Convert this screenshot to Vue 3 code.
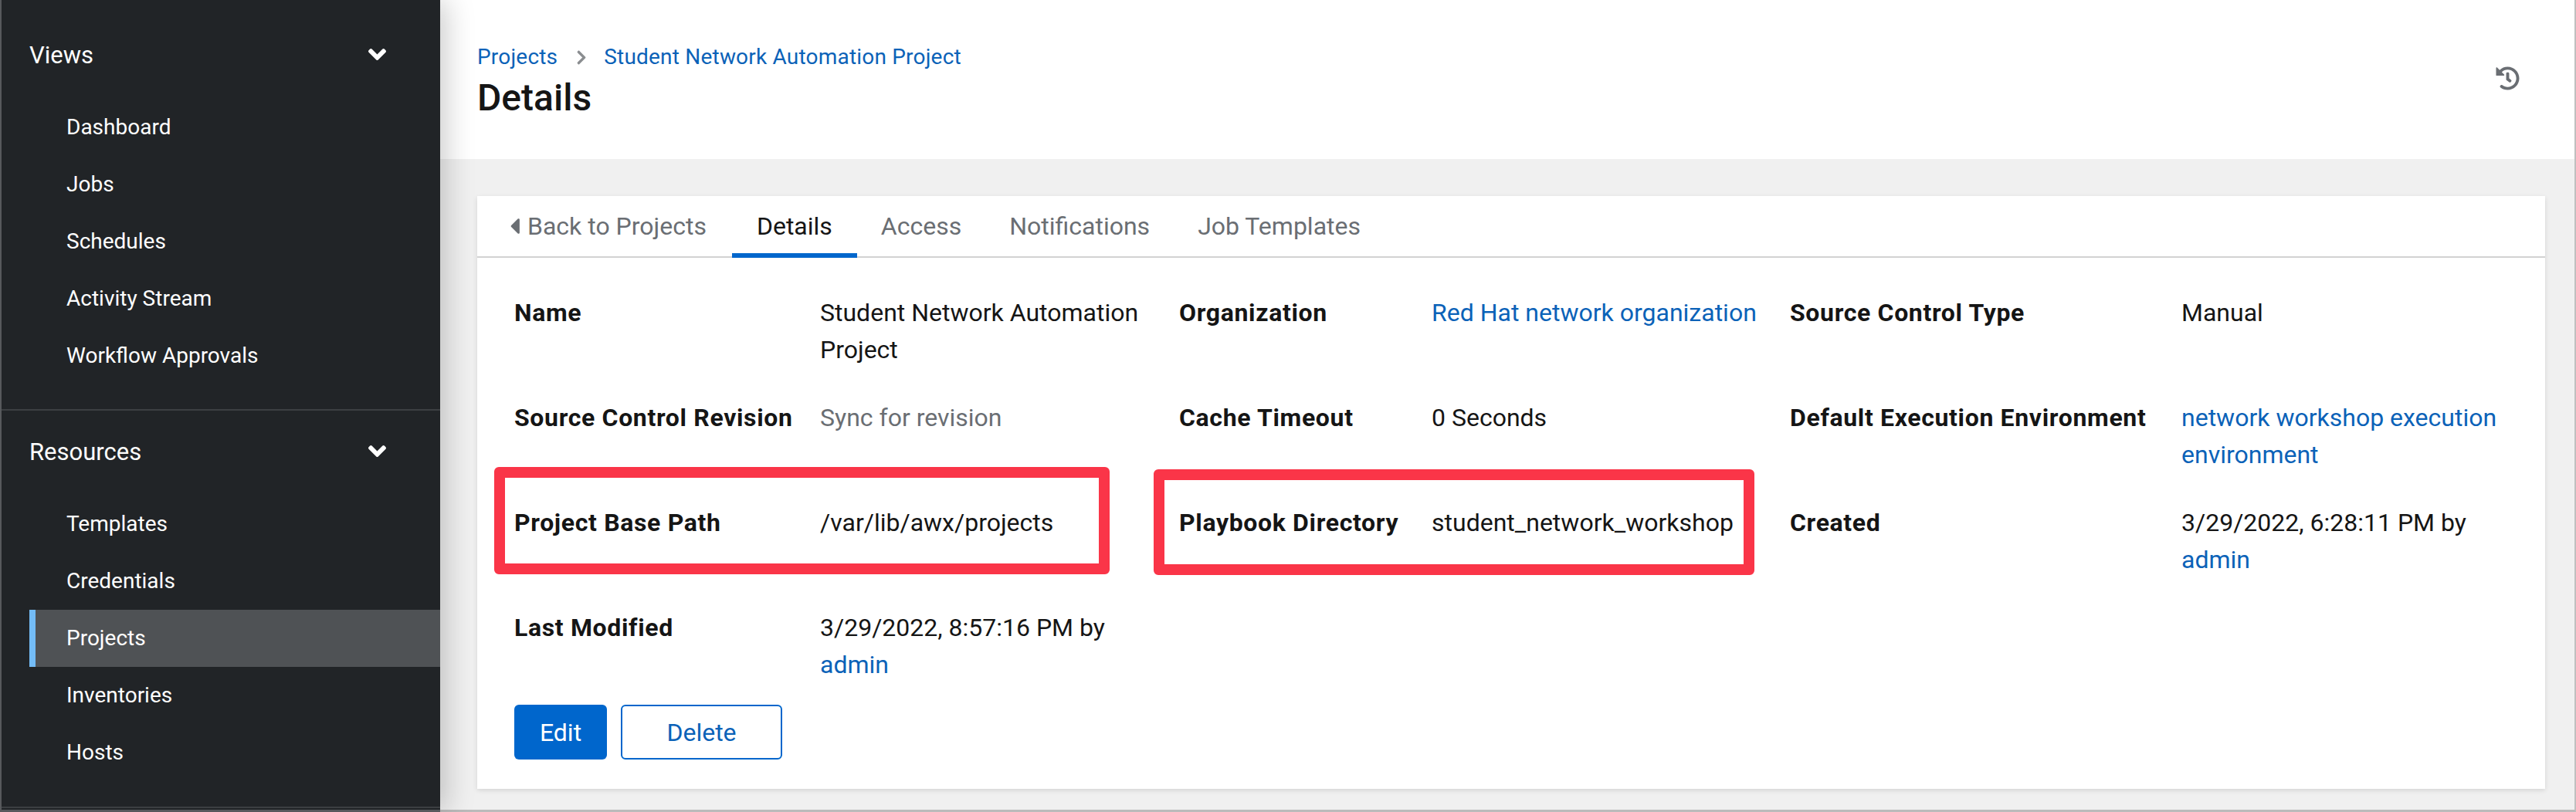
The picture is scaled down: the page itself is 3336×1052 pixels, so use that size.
<script setup>
// sidebar + details data
const navGroups = [
  { title: 'Views', items: ['Dashboard', 'Jobs', 'Schedules', 'Activity Stream', 'Workflow Approvals'] },
  { title: 'Resources', items: ['Templates', 'Credentials', 'Projects', 'Inventories', 'Hosts'] },
]
const tabs = ['Details', 'Access', 'Notifications', 'Job Templates']
const angleDown = 'M143 352.3L7 216.3c-9.4-9.4-9.4-24.6 0-33.9l22.6-22.6c9.4-9.4 24.6-9.4 33.9 0l96.4 96.4 96.4-96.4c9.4-9.4 24.6-9.4 33.9 0l22.6 22.6c9.4 9.4 9.4 24.6 0 33.9l-136 136c-9.2 9.4-24.4 9.4-33.8 0z'
</script>

<template>
  <div class="page">
    <aside class="sidebar">
      <section v-for="group in navGroups" :key="group.title" class="nav-group">
        <div class="nav-title">
          <span>{{ group.title }}</span>
          <svg class="chevron" viewBox="0 0 320 512"><path :d="angleDown" /></svg>
        </div>
        <div
          v-for="item in group.items"
          :key="item"
          class="nav-item"
          :class="{ active: item === 'Projects' }"
        >
          {{ item }}
        </div>
      </section>
    </aside>

    <main class="main">
      <header class="header">
        <div>
          <nav class="crumbs">
            <a>Projects</a>
            <svg class="crumb-sep" viewBox="0 0 320 512">
              <path d="M285.476 272.971L91.132 467.314c-9.373 9.373-24.569 9.373-33.941 0l-22.667-22.667c-9.357-9.357-9.375-24.522-.04-33.901L188.505 256 34.484 101.255c-9.335-9.379-9.317-24.544.04-33.901l22.667-22.667c9.373-9.373 24.569-9.373 33.941 0L285.475 239.03c9.373 9.372 9.373 24.568.001 33.941z" />
            </svg>
            <a>Student Network Automation Project</a>
          </nav>
          <h1>Details</h1>
        </div>
        <svg class="history" viewBox="0 0 512 512">
          <path d="M504 255.531c.253 136.64-111.18 248.372-247.82 248.468-59.015.042-113.223-20.53-155.822-54.911-11.077-8.94-11.905-25.541-1.839-35.607l11.267-11.267c8.609-8.609 22.353-9.551 31.891-1.984C173.062 425.135 212.781 440 256 440c101.705 0 184-82.311 184-184 0-101.705-82.311-184-184-184-48.814 0-93.149 18.969-126.068 49.932l50.754 50.754c10.08 10.08 2.941 27.314-11.313 27.314H24c-8.837 0-16-7.163-16-16V38.627c0-14.254 17.234-21.393 27.314-11.314l49.372 49.372C129.209 34.136 189.552 8 256 8c136.81 0 247.747 110.78 248 247.531zm-180.912 78.784l9.823-12.63c8.138-10.463 6.253-25.542-4.21-33.679L288 256.349V152c0-13.255-10.745-24-24-24h-16c-13.255 0-24 10.745-24 24v135.651l65.409 50.874c10.463 8.137 25.541 6.253 33.679-4.21z" />
        </svg>
      </header>

      <div class="content">
        <div class="card">
          <div class="tabs">
            <div class="tab back">
              <svg class="caret" viewBox="0 0 192 512">
                <path d="M192 127.338v257.324c0 17.818-21.543 26.741-34.142 14.142L29.196 270.142c-7.81-7.81-7.81-20.474 0-28.284l128.662-128.662c12.599-12.6 34.142-3.676 34.142 14.142z" />
              </svg>
              Back to Projects
            </div>
            <div v-for="tab in tabs" :key="tab" class="tab" :class="{ selected: tab === 'Details' }">{{ tab }}</div>
          </div>

          <div class="details">
            <div class="label">Name</div>
            <div class="value">Student Network Automation<br />Project</div>
            <div class="label">Organization</div>
            <div class="value"><a>Red Hat network organization</a></div>
            <div class="label">Source Control Type</div>
            <div class="value">Manual</div>

            <div class="label">Source Control Revision</div>
            <div class="value muted">Sync for revision</div>
            <div class="label">Cache Timeout</div>
            <div class="value">0 Seconds</div>
            <div class="label">Default Execution Environment</div>
            <div class="value"><a>network workshop execution<br />environment</a></div>

            <div class="label">Project Base Path</div>
            <div class="value">/var/lib/awx/projects</div>
            <div class="label">Playbook Directory</div>
            <div class="value">student_network_workshop</div>
            <div class="label">Created</div>
            <div class="value">3/29/2022, 6:28:11 PM by<br /><a>admin</a></div>

            <div class="label">Last Modified</div>
            <div class="value">3/29/2022, 8:57:16 PM by<br /><a>admin</a></div>
          </div>

          <div class="actions">
            <button class="btn primary">Edit</button>
            <button class="btn secondary">Delete</button>
          </div>

          <!-- red annotation boxes drawn over the screenshot -->
          <div class="mark mark-base"></div>
          <div class="mark mark-playbook"></div>
        </div>
      </div>
    </main>
  </div>
</template>

<style>
html,
body {
  margin: 0;
  background: #f0f0f0;
}
</style>

<style scoped>
.page {
  width: 3336px;
  height: 1052px;
  display: flex;
  overflow: hidden;
  box-sizing: border-box;
  font-family: Roboto, 'Liberation Sans', sans-serif;
  font-size: 32px;
  line-height: 48px;
  color: #151515;
}

.sidebar {
  width: 570px;
  flex: none;
  box-sizing: border-box;
  background: #212427;
  color: #fff;
  border-left: 2px solid #57595c;
  border-bottom: 3px solid #57595c;
  box-shadow: 6px 0 36px rgba(0, 0, 0, 0.22);
  position: relative;
  z-index: 1;
  font-size: 28px;
}
.nav-group {
  padding-bottom: 33px;
  border-bottom: 2px solid #3c3f42;
}
.nav-group:first-child {
  padding-top: 18px;
  padding-bottom: 32px;
}
.nav-title {
  height: 108px;
  margin-bottom: 2px;
  padding: 0 70px 0 36px;
  display: flex;
  align-items: center;
  justify-content: space-between;
  font-size: 31px;
}
.chevron {
  width: 23px;
  height: 37px;
  fill: #fff;
  margin-top: -3px;
}
.nav-item {
  height: 74px;
  margin-left: 36px;
  padding-left: 48px;
  display: flex;
  align-items: center;
}
.nav-item.active {
  background: #4f5255;
  border-left: 8px solid #73bcf7;
  padding-left: 40px;
}

.main {
  flex: 1;
  min-width: 0;
  display: flex;
  flex-direction: column;
  border-right: 2px solid #c0c0c0;
  border-bottom: 3px solid #bbb;
  background: #f0f0f0;
}
.header {
  height: 206px;
  flex: none;
  box-sizing: border-box;
  background: #fff;
  padding: 50px 40px 0 48px;
  display: flex;
  justify-content: space-between;
  align-items: flex-start;
}
.crumbs {
  display: flex;
  align-items: center;
  font-size: 28px;
  letter-spacing: 0.2px;
}
.crumb-sep {
  width: 18px;
  height: 21px;
  margin: 0 20px 0 22px;
  fill: #8a8d90;
}
h1 {
  margin: -1px 0 0;
  font-size: 48px;
  font-weight: 500;
  line-height: 60px;
  color: #151515;
}
.history {
  width: 31px;
  height: 31px;
  margin-top: 36px;
  margin-right: 31px;
  fill: #6a6e73;
}

.content {
  padding: 48px 38px 0 48px;
}
.card {
  position: relative;
  height: 768px;
  box-sizing: border-box;
  background: #fff;
  box-shadow: 0 2px 6px rgba(3, 3, 3, 0.12);
}
.tabs {
  height: 80px;
  box-sizing: border-box;
  display: flex;
  padding-left: 8px;
  border-bottom: 2px solid #d2d2d2;
}
.tab {
  padding: 15px 31px 0;
  color: #6a6e73;
  height: 78px;
  box-sizing: border-box;
}
.tab.back {
  display: flex;
  align-items: flex-start;
  padding-left: 34px;
  padding-right: 33px;
}
.caret {
  width: 13px;
  height: 34px;
  margin: 7px 10px 0 0;
  fill: #6a6e73;
}
.tab.selected {
  color: #151515;
  height: 80px;
  padding-left: 32px;
  padding-right: 32px;
  border-bottom: 6px solid #06c;
}

.details {
  margin-top: 47px;
  margin-left: 48px;
  display: grid;
  grid-template-columns: 396px 465px 327px 464px 507px 1fr;
  row-gap: 40px;
  grid-auto-rows: 96px;
}
.label {
  font-weight: 700;
  letter-spacing: 0.65px;
}
.muted {
  color: #6a6e73;
}
a {
  color: #0b62b8;
}

.actions {
  margin: 28px 0 0 48px;
  display: flex;
  gap: 18px;
}
.btn {
  height: 71px;
  box-sizing: border-box;
  border-radius: 6px;
  font: inherit;
  padding: 0;
}
.primary {
  width: 120px;
  background: #06c;
  border: none;
  color: #fff;
}
.secondary {
  width: 209px;
  background: #fff;
  border: 2px solid #06c;
  color: #0b62b8;
}

.mark {
  position: absolute;
  box-sizing: border-box;
  border: 14px solid #fa3548;
  border-radius: 6px;
  pointer-events: none;
}
.mark-base {
  left: 22px;
  top: 351px;
  width: 797px;
  height: 139px;
}
.mark-playbook {
  left: 876px;
  top: 354px;
  width: 778px;
  height: 137px;
}
</style>
